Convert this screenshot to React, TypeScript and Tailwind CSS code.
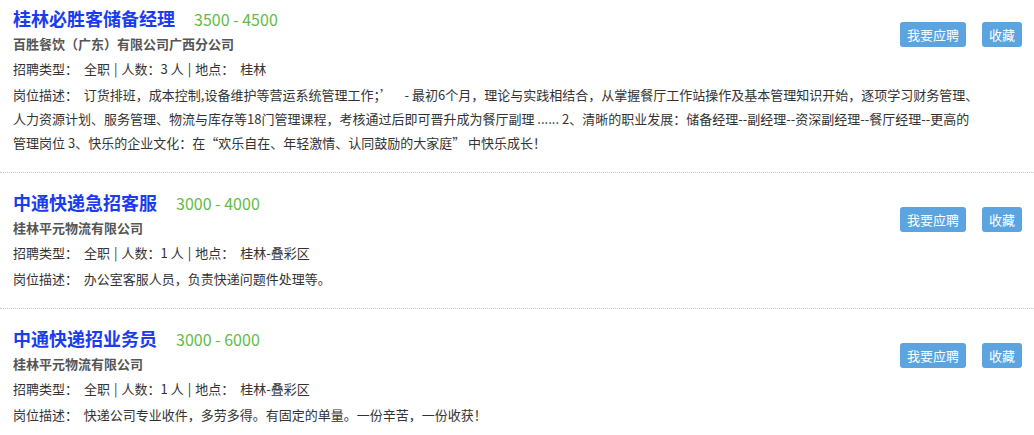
import React from 'react';

type Job = {
  title: string;
  salary: string;
  company: string;
  count: number;
  place: string;
  desc: string[];
};

const jobs: Job[] = [
  {
    title: '桂林必胜客储备经理',
    salary: '3500 - 4500',
    company: '百胜餐饮（广东）有限公司广西分公司',
    count: 3,
    place: '桂林',
    desc: [
      '订货排班，成本控制,设备维护等营运系统管理工作；’\u00a0\u00a0\u00a0\u00a0- 最初6个月，理论与实践相结合，从掌握餐厅工作站操作及基本管理知识开始，逐项学习财务管理、',
      '人力资源计划、服务管理、物流与库存等18门管理课程，考核通过后即可晋升成为餐厅副理 ...... 2、清晰的职业发展：储备经理--副经理--资深副经理--餐厅经理--更高的',
      '管理岗位 3、快乐的企业文化：在“欢乐自在、年轻激情、认同鼓励的大家庭”\u00a0中快乐成长！',
    ],
  },
  {
    title: '中通快递急招客服',
    salary: '3000 - 4000',
    company: '桂林平元物流有限公司',
    count: 1,
    place: '桂林-叠彩区',
    desc: ['办公室客服人员，负责快递问题件处理等。'],
  },
  {
    title: '中通快递招业务员',
    salary: '3000 - 6000',
    company: '桂林平元物流有限公司',
    count: 1,
    place: '桂林-叠彩区',
    desc: ['快递公司专业收件，多劳多得。有固定的单量。一份辛苦，一份收获！'],
  },
];

function JobItem({ job, first }: { job: Job; first: boolean }) {
  return (
    <div
      className={`pl-[13px] pr-[12px] pb-[17px] border-b border-dotted border-[#c8c8c8] ${
        first ? 'pt-[7px]' : 'pt-[18px]'
      }`}
    >
      <div className="flex items-start">
        <div className="flex-1">
          <div className="flex items-baseline h-[22px] leading-[22px]">
            <span className="text-[18px] font-bold text-[#1a3cf0]">{job.title}</span>
            <span className="ml-[19px] text-[16px] text-[#62bb47]">{job.salary}</span>
          </div>
          <div className="mt-[3px] text-[13px] leading-[24px] font-bold text-[#555]">{job.company}</div>
          <div className="flex text-[13px] leading-[26px] text-[#333] whitespace-pre">
            <span>招聘类型：</span>
            <span className="ml-[6px]">全职</span>
            <span className="mx-[4px]">|</span>
            <span>人数：{job.count} 人</span>
            <span className="mx-[4px]">|</span>
            <span>地点：</span>
            <span className="ml-[6px]">{job.place}</span>
          </div>
        </div>
        <div className={`flex gap-[16px] ${first ? 'mt-[15px]' : 'mt-[16px]'}`}>
          <button className="h-[25px] px-[7px] rounded-[3px] bg-[#5ba4e0] text-white text-[13px] leading-[25px]">
            我要应聘
          </button>
          <button className="h-[25px] px-[7px] rounded-[3px] bg-[#5ba4e0] text-white text-[13px] leading-[25px]">
            收藏
          </button>
        </div>
      </div>
      <div className="mt-[1px] text-[13px] leading-[24px] text-[#333]">
        {job.desc.map((line, i) => (
          <div key={i}>
            {i === 0 ? '岗位描述：\u00a0\u00a0' : ''}
            {line}
          </div>
        ))}
      </div>
    </div>
  );
}

export default function App() {
  return (
    <div
      className="w-[1034px] h-[435px] overflow-hidden bg-white"
      style={{ fontFamily: '"Noto Sans CJK SC", "Noto Sans", sans-serif' }}
    >
      {jobs.map((job, i) => (
        <JobItem key={i} job={job} first={i === 0} />
      ))}
    </div>
  );
}
